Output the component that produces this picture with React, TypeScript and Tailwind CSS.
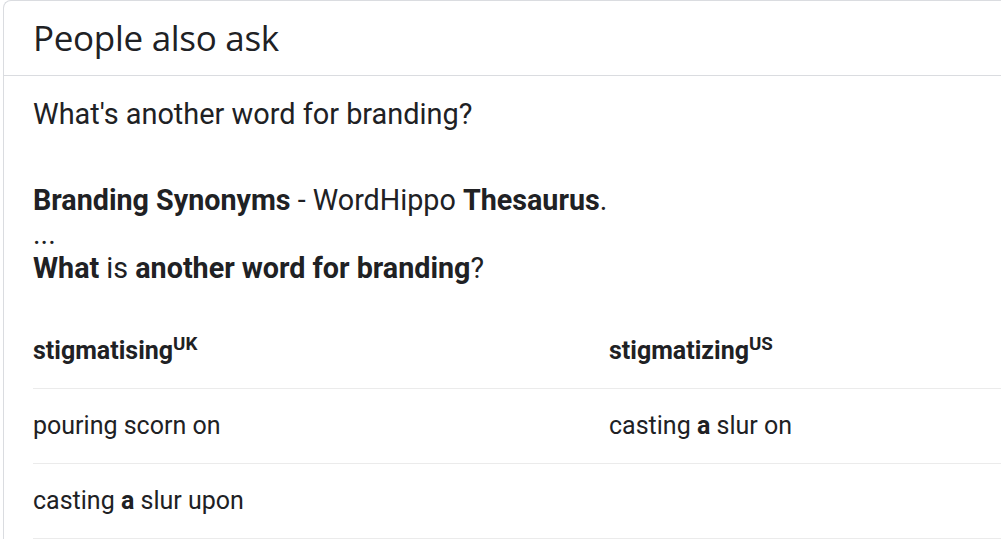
const rows: [React.ReactNode, React.ReactNode][] = [
  [
    <>pouring scorn on</>,
    <>
      casting <b className="font-bold">a</b> slur on
    </>,
  ],
  [
    <>
      casting <b className="font-bold">a</b> slur upon
    </>,
    <></>,
  ],
];

const App = () => {
  return (
    <div className="w-[1001px] h-[550px] overflow-hidden bg-white text-[#202124] font-['Roboto',sans-serif]">
      <div className="ml-[3px] w-[1200px] border-l border-t border-[#dadce0] rounded-tl-lg">
        {/* Header */}
        <div className="h-[75px] flex items-center px-[29px] border-b border-[#dadce0]">
          <h2 className="text-[35px] font-['Open_Sans',sans-serif] font-normal tracking-[-0.3px]">
            People also ask
          </h2>
        </div>

        {/* Question */}
        <div className="h-[78px] flex items-center px-[29px]">
          <span className="text-[28.9px]">What's another word for branding?</span>
        </div>

        {/* Answer */}
        <div className="mt-[29px] px-[29px] text-[28.7px] leading-[34px]">
          <div>
            <b className="font-bold">Branding Synonyms</b> - WordHippo <b className="font-bold">Thesaurus</b>.
          </div>
          <div>...</div>
          <div>
            <b className="font-bold">What</b> is <b className="font-bold">another word for branding</b>?
          </div>
        </div>

        {/* Table */}
        <div className="mt-[29px] ml-[29px]">
          <div className="grid grid-cols-[576px_1fr] h-[75px] items-center border-b border-[#ebebeb] text-[25px] font-bold">
            <div>
              stigmatising<sup>UK</sup>
            </div>
            <div>
              stigmatizing<sup>US</sup>
            </div>
          </div>
          {rows.map((r, i) => (
            <div
              key={i}
              className="grid grid-cols-[576px_1fr] h-[75px] items-center border-b border-[#ebebeb] text-[25px]"
            >
              <div>{r[0]}</div>
              <div>{r[1]}</div>
            </div>
          ))}
        </div>
      </div>
    </div>
  );
};

export default App;
